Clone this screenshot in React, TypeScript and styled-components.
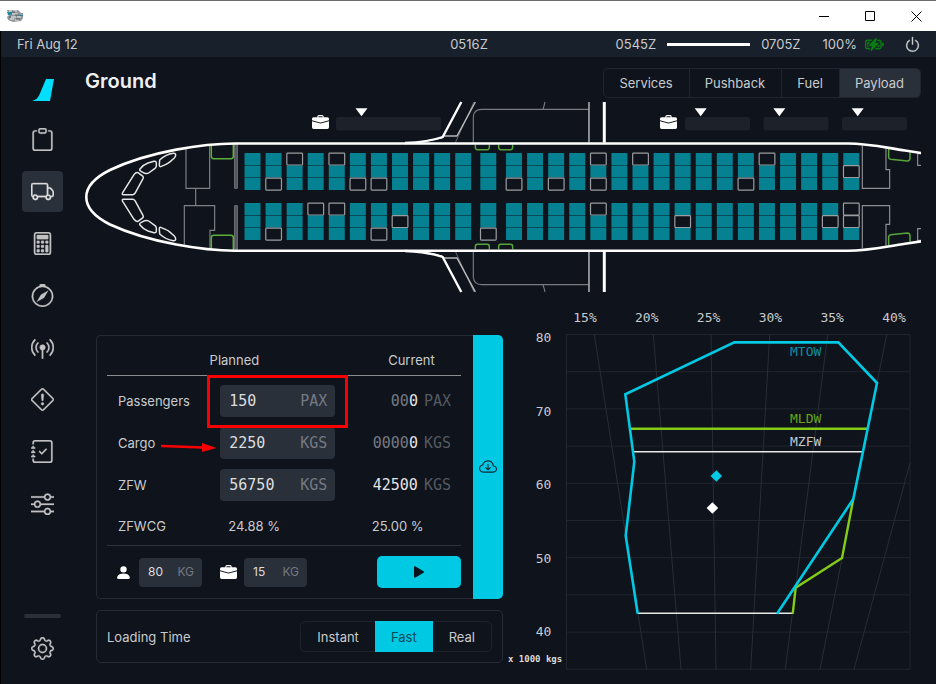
import React, { useState } from 'react';
import styled, { createGlobalStyle, css } from 'styled-components';
import {
  BsBatteryCharging,
  BsBriefcaseFill,
  BsBroadcastPin,
  BsCalculator,
  BsClipboard,
  BsCloudArrowDown,
  BsCompass,
  BsExclamationDiamond,
  BsGear,
  BsJournalCheck,
  BsPersonFill,
  BsPlayFill,
  BsPower,
  BsSliders,
  BsTruck,
} from 'react-icons/bs';

const color = {
  body: '#0f131b',
  status: '#17202b',
  accent: '#2a303a',
  border: '#262c36',
  text: '#c9cbce',
  dim: '#747982',
  faint: '#545962',
  cyan: '#00c9e4',
  teal: '#058192',
  green: '#84cc16',
  red: '#fb0000',
};

const sans = "Inter, 'Liberation Sans', sans-serif";
const mono = "'DejaVu Sans Mono', 'Liberation Mono', monospace";

const GlobalStyle = createGlobalStyle`
  *, *::before, *::after { box-sizing: border-box; }
  body { margin: 0; background: ${color.body}; color: ${color.text}; font: 14px/20px ${sans}; }
  button, input { font: inherit; color: inherit; }
  svg { display: block; }
`;

const Window = styled.div`
  display: flex;
  flex-direction: column;
  min-height: 100vh;
`;

const TitleBar = styled.header`
  display: flex;
  align-items: center;
  justify-content: space-between;
  height: 31px;
  padding: 0 0 0 7px;
  border-top: 1px solid #6b6a70;
  background: #fff;
`;

const WindowControls = styled.div`
  display: flex;
  gap: 6px;
`;

const WindowButton = styled.button`
  display: grid;
  place-items: center;
  width: 40px;
  height: 26px;
  padding: 0;
  border: 0;
  background: none;
`;

const StatusBar = styled.div`
  display: grid;
  grid-template-columns: 1fr auto 1fr;
  align-items: center;
  height: 26px;
  padding: 0 15px 0 16px;
  border-left: 1px solid #000;
  background: ${color.status};
  font-size: 13px;
`;

const StatusRight = styled.div`
  display: flex;
  align-items: center;
  justify-content: flex-end;
`;

const FlightProgress = styled.div`
  width: 83px;
  height: 3px;
  margin: 0 11px;
  background: #fff;
`;

const Battery = styled.div`
  display: flex;
  align-items: center;
  gap: 8px;
  margin: 0 20px 0 22px;
  svg { color: #0a7d10; stroke: currentColor; stroke-width: 0.3; }
`;

const IconButton = styled.button`
  padding: 0;
  border: 0;
  background: none;
  svg { stroke: currentColor; stroke-width: 0.4; }
`;

const Body = styled.div`
  display: flex;
  flex: 1;
  border-left: 1px solid #000;
`;

const Sidebar = styled.nav`
  display: flex;
  flex-direction: column;
  align-items: center;
  flex: none;
  width: 84px;
  padding: 22px 1px 15px 0;
`;

const NavList = styled.div`
  display: flex;
  flex-direction: column;
  gap: 11px;
  margin-top: 18px;
`;

const NavLink = styled.a<{ $active?: boolean }>`
  display: grid;
  place-items: center;
  width: 41px;
  height: 41px;
  border-radius: 4px;
  color: ${(p) => (p.$active ? '#dededf' : '#c2c2c3')};
  background: ${(p) => (p.$active ? color.accent : 'transparent')};
  svg { stroke: currentColor; stroke-width: 0.2; }
`;

const NavDivider = styled.div`
  width: 37px;
  height: 4px;
  margin: auto 0 10px;
  border-radius: 2px;
  background: ${color.accent};
`;

const Content = styled.main`
  flex: 1;
  min-width: 0;
  padding: 11px 15px 14px 0;
`;

const PageHeader = styled.div`
  display: flex;
  align-items: center;
  justify-content: space-between;
  height: 30px;
  margin-bottom: 3px;
`;

const Title = styled.h1`
  margin: 0 0 5px;
  color: #f0f0f1;
  font-size: 20px;
  font-weight: 600;
  line-height: 24px;
`;

const Tabs = styled.div`
  display: flex;
  height: 30px;
  border: 1px solid #1f262f;
  border-radius: 5px;
  overflow: hidden;
`;

const Tab = styled.button<{ $active?: boolean }>`
  padding: 0 16px 0 15px;
  border: 0;
  font-size: 13px;
  background: ${(p) => (p.$active ? color.accent : 'transparent')};
  & + & { border-left: 1px solid #1f262f; }
`;

const Drawing = styled.svg`
  width: 100%;
  height: auto;
`;

const Lower = styled.div`
  display: grid;
  grid-template-columns: minmax(0, 418fr) minmax(0, 415fr);
  gap: 3px;
  margin-top: 12px;
`;

const Forms = styled.div`
  padding: 30px 0 0 11px;
`;

const PayloadCard = styled.section`
  display: flex;
`;

const PayloadPanel = styled.div`
  flex: 1;
  min-width: 0;
  padding: 0 12px 0 10px;
  border: 1px solid ${color.border};
  border-right: 0;
  border-radius: 5px 0 0 5px;
`;

const ImportButton = styled.button`
  display: grid;
  place-items: center;
  width: 30px;
  padding: 0;
  border: 0;
  border-radius: 0 5px 5px 0;
  color: #0f2a35;
  background: ${color.cyan};
`;

const PayloadTable = styled.table`
  width: 100%;
  border-spacing: 0;
  table-layout: fixed;
  font-size: 13px;
`;

const HeadCell = styled.th`
  padding: 12px 0 3px;
  border-bottom: 1px solid #8b8d91;
  font-weight: 400;
  line-height: 24px;
`;

const Row = styled.tr<{ $first?: boolean; $last?: boolean }>`
  height: ${(p) => (p.$first ? 46 : p.$last ? 40 : 42)}px;
  > * {
    padding: ${(p) => (p.$first ? '4px 0 0' : '0')};
    ${(p) => p.$last && css`border-bottom: 1px solid #2b323c;`}
  }
`;

const LabelCell = styled.th`
  font-weight: 400;
  text-align: left;
  label, span { padding-left: 11px; }
`;

const Value = styled.span<{ $indent: number }>`
  padding-left: ${(p) => p.$indent}px;
`;

const Reading = styled.div`
  display: flex;
  justify-content: flex-end;
  gap: 6px;
  padding-right: 10px;
  color: ${color.dim};
  font: 15px/20px ${mono};
  b { color: #e4e4e5; font-weight: 400; }
`;

const Unit = styled.span<{ $faint?: boolean }>`
  color: ${(p) => (p.$faint ? color.faint : color.dim)};
`;

const Field = styled.div<{ $small?: boolean }>`
  position: relative;
  display: flex;
  align-items: center;
  width: ${(p) => (p.$small ? 63 : 115)}px;
  height: ${(p) => (p.$small ? 29 : 32)}px;
  padding: 0 8px 0 9px;
  border-radius: 4px;
  background: ${color.accent};
  font: ${(p) => (p.$small ? `12px/20px ${sans}` : `15px/20px ${mono}`)};
`;

const FieldInput = styled.input`
  flex: 1;
  min-width: 0;
  width: 0;
  padding: 0;
  border: 0;
  outline: 0;
  color: #dcdddf;
  background: none;
`;

const Highlight = styled.div`
  position: absolute;
  z-index: 2;
  inset: -10px -13px -11px;
  border: 3px solid ${color.red};
  pointer-events: none;
`;

const Pointer = styled.svg`
  position: absolute;
  top: 15px;
  left: -59px;
`;

const Footer = styled.div`
  display: flex;
  align-items: center;
  height: 52px;
  padding-left: 8px;
  color: #fff;
`;

const WeightLabel = styled.label`
  display: flex;
  align-items: center;
  gap: 7px;
  margin-right: 18px;
`;

const StartButton = styled.button`
  display: grid;
  place-items: center;
  width: 84px;
  height: 32px;
  margin-left: auto;
  padding: 0;
  border: 0;
  border-radius: 5px;
  color: #0b141c;
  background: ${color.cyan};
`;

const LoadingCard = styled.section`
  display: flex;
  align-items: center;
  justify-content: space-between;
  margin-top: 11px;
  padding: 10px;
  border: 1px solid ${color.border};
  border-radius: 5px;
  font-size: 13px;
`;

const Segments = styled.div`
  display: flex;
  height: 31px;
  border: 1px solid #1d232d;
  border-radius: 5px;
`;

const Segment = styled.button<{ $active?: boolean }>`
  margin: -1px 0;
  padding: 0 16px;
  border: 0;
  color: ${(p) => (p.$active ? '#0c4a5a' : color.text)};
  background: ${(p) => (p.$active ? color.cyan : 'transparent')};
`;

function AppIcon() {
  return (
    <svg width="16" height="14" viewBox="0 0 16 14" aria-hidden="true">
      <path d="M0 1h11l3 3h2v5l-2 3-8 1-5-2-1-3 2-2z" fill="#8f979a" />
      <path d="M0 3h5v3H1zM12 6h4v1h-4z" fill="#1f8ba0" />
      <path d="M2 2h3M6 2h4M5 5h6M4 8h5M10 8h4M3 10h4M8 11h4" stroke="#f0f0f0" strokeWidth="1" />
      <path d="M5 3h3M8 6h4M2 8h2M9 10h4" stroke="#4e575a" strokeWidth="1" />
    </svg>
  );
}

function TailLogo() {
  return (
    <svg width="22" height="22" viewBox="0 0 22 22" aria-label="Dashboard">
      <path d="M14 0h8l-4 22H0c4-1 6-3 7.500-6.500z" fill="#00e0fe" />
    </svg>
  );
}

const navItems = [
  { name: 'Dispatch', icon: BsClipboard },
  { name: 'Ground', icon: BsTruck },
  { name: 'Performance', icon: BsCalculator },
  { name: 'Navigation', icon: BsCompass },
  { name: 'ATC', icon: BsBroadcastPin },
  { name: 'Failures', icon: BsExclamationDiamond },
  { name: 'Checklists', icon: BsJournalCheck },
  { name: 'Presets', icon: BsSliders },
];

const seatColumns = Array.from({ length: 29 }, (_, i) => {
  if (i < 11) return 244.5 + 21.07 * i;
  if (i === 11) return 480.3;
  return 506 + 21.08 * (i - 12);
});
const seatRows = [153, 165.5, 178, 203, 215.5, 228];
const emptySeats = [
  [2, 4, 16, 18, 24],
  [28],
  [1, 5, 6, 12, 14, 16, 23],
  [3, 4, 16, 28],
  [7, 20, 27, 28],
  [1, 6, 11],
];

const cargoHolds = [
  { x: 336, width: 105, marker: 361.5 },
  { x: 685, width: 65, marker: 700.7 },
  { x: 763.5, width: 65, marker: 779.3 },
  { x: 842, width: 65, marker: 857.7 },
];

function CockpitSide() {
  return (
    <g stroke="#e6e6e6" strokeWidth="4.500" strokeLinejoin="round">
      <path d="M174 218L189 229Q191 232 189 236L165 280Q162 284 158 284H130Q125 284 128 278L162 224Q168 216 174 218Z" />
      <path d="M180 207Q190 194 204 189L222 184Q229 182 229 190V198Q229 202 225 205L206 219Q202 222 194 220L183 214Q177 211 180 207Z" />
      <path d="M239 180Q258 163 280 160Q287 159 287 165Q287 170 283 174L268 187Q264 191 258 193L244 199Q238 202 238 195Z" />
    </g>
  );
}

function WingSide() {
  return (
    <g>
      <path d="M466 158L522 36" stroke="#74767b" strokeWidth="2.500" />
      <path d="M526 36L471 138H432" stroke="#b4b5b7" strokeWidth="4.500" />
      <path d="M484 36L428 141C400 151 365 157 315 159" stroke="#fff" strokeWidth="7" />
      <path d="M428 143C400 150 375 154 350 159" stroke="#fff" strokeWidth="4" />
      <path d="M520 158V80Q522 58 544 58H867M735 36L732 48L729 58" stroke="#777a80" strokeWidth="3.500" />
      <path d="M867 36V158" stroke="#a3a4a8" strokeWidth="5" />
      <path d="M913 36V158" stroke="#fff" strokeWidth="9" />
      <path d="M526 164V172Q526 179 532 179H562Q568 179 568 172V164M596 164V172Q596 179 602 179H632Q638 179 638 172V164" stroke="#56a53a" strokeWidth="4.500" />
    </g>
  );
}

function TailSide() {
  return (
    <g>
      <path d="M427 167V295H509V239H498V175" stroke="#8c8e93" strokeWidth="3.500" />
      <path d="M603 191H593V226H603" stroke="#8c8e93" strokeWidth="3.500" />
      <path d="M506 177V202Q506 207 512 208L562 213Q569 213 570 206V187" stroke="#56a53a" strokeWidth="4.500" />
    </g>
  );
}

function Aircraft() {
  return (
    <Drawing viewBox="85 101 836 192" fill="none" role="img" aria-label="Seat and cargo map">
      {cargoHolds.map((hold) => (
        <g key={hold.x}>
          <rect x={hold.x} y="117" width={hold.width} height="13.500" rx="2" fill="#1d2129" />
          <path d={`M${hold.marker - 6} 108.300h12l-6 8z`} fill="#fff" />
        </g>
      ))}
      <BsBriefcaseFill x="312" y="114" size={17} color="#fff" />
      <BsBriefcaseFill x="660" y="114" size={17} color="#fff" />

      <g transform="translate(80 100) scale(0.3333)">
        <path d="M318 144V265H389V134M347 265V317M313 434V317H404V391H390V446" stroke="#7e8085" strokeWidth="3.500" />
        <path d="M464 132H472V265H464ZM464 317H472V448H464Z" fill="#4c4f55" stroke="#85878b" strokeWidth="2.500" />
        <path d="M394 134V169Q394 176 401 176H453Q460 176 460 169V132M394 448V413Q394 406 401 406H453Q460 406 460 413V450" stroke="#5cb038" strokeWidth="4.500" />
        <CockpitSide />
        <g transform="translate(0 582) scale(1 -1)"><CockpitSide /></g>
      </g>
      <g transform="translate(300 90) scale(0.3333)">
        <WingSide />
        <g transform="translate(0 642) scale(1 -1)"><WingSide /></g>
      </g>
      <g transform="translate(720 90) scale(0.3333)">
        <TailSide />
        <g transform="translate(0 642) scale(1 -1)"><TailSide /></g>
      </g>

      <path
        d="M923 153.300L905 150.500C885 147.500 868 143.500 848 143.500H235C205 143.500 150 151 110 170C95 177.500 86.300 187 86.300 197C86.300 207 95 217 110 224.500C150 243 205 250.700 235 250.700H848C868 250.700 885 246.700 905 243.800L923 241"
        stroke="#fff"
        strokeWidth="2.600"
      />

      {seatRows.map((y, row) =>
        seatColumns.map((x, col) =>
          emptySeats[row].includes(col) ? (
            <rect key={`${row}-${col}`} x={x + 0.2} y={y + 0.1} width="15.700" height="12" rx="0.800" stroke="#9b9da0" strokeWidth="1.200" />
          ) : (
            <rect key={`${row}-${col}`} x={x} y={y} width="16" height="12" rx="0.500" fill={color.teal} />
          ),
        ),
      )}
    </Drawing>
  );
}

const ChartText = styled.text<{ $small?: boolean }>`
  font-family: ${mono};
  font-size: ${(p) => (p.$small ? 9 : 13)}px;
  font-weight: ${(p) => (p.$small ? 700 : 400)};
`;

const massLines = Array.from({ length: 10 }, (_, i) => 334.5 + 37.2 * i);
const cgLines = [
  'M594.300 334.500L646.700 669.300',
  'M653.300 334.500L681 669.300',
  'M711 334.500L716 669.300',
  'M769.700 334.500L750.700 669.300',
  'M827.700 334.500L785.300 669.300',
  'M886.700 334.500L820 669.300',
  'M910 463L854 669.300',
];

function EnvelopeChart() {
  return (
    <Drawing viewBox="506 305 415 365" fill="none" role="img" aria-label="Weight and balance envelope">
      <g stroke="#20252e" strokeWidth="1">
        {massLines.map((y) => <path key={y} d={`M566 ${y}H910`} />)}
        <path d="M566.500 334.500V669M910 334.500V669" />
        {cgLines.map((d) => <path key={d} d={d} stroke="#282d36" />)}
      </g>
      <g fill={color.text} textAnchor="middle">
        {[15, 20, 25, 30, 35, 40].map((cg, i) => (
          <ChartText key={cg} x={585 + 61.8 * i} y="322">{cg}%</ChartText>
        ))}
        {[80, 70, 60, 50, 40].map((mass, i) => (
          <ChartText key={mass} x="543.500" y={342 + 73.6 * i}>{mass}</ChartText>
        ))}
      </g>
      <ChartText $small x="508" y="662" fill="#dcdcdc">x 1000 kgs</ChartText>

      <path d="M637.700 613.300H792.700" stroke="#e8e8e8" strokeWidth="1.400" />
      <path d="M634 451.700H862" stroke="#e8e8e8" strokeWidth="1.500" />
      <path d="M631 428.700H867" stroke={color.green} strokeWidth="2.600" />
      <path d="M853.300 499L842 558L795.700 587.700L792.700 613.800" stroke={color.green} strokeWidth="2.400" />
      <path
        d="M637.700 613.800L625.700 535.700L634.300 461.700L625.300 394.300L734.300 342.400H838.300L877 383L853.300 499L777 613.800"
        stroke={color.cyan}
        strokeWidth="2.600"
      />
      <path d="M716.300 470.200l5.800 5.800-5.800 5.800-5.800-5.800z" fill={color.cyan} />
      <path d="M712.400 502.200l5.800 5.800-5.800 5.800-5.800-5.800z" fill="#fff" />
      <ChartText x="790" y="356" fill="#078fa3">MTOW</ChartText>
      <ChartText x="790" y="423" fill="#69a417">MLDW</ChartText>
      <ChartText x="790" y="446" fill="#c6c8cb">MZFW</ChartText>
    </Drawing>
  );
}

const plannedRows = [
  { id: 'pax', label: 'Passengers', value: '150', unit: 'PAX', lead: '00', current: '0' },
  { id: 'cargo', label: 'Cargo', value: '2250', unit: 'KGS', lead: '0000', current: '0' },
  { id: 'zfw', label: 'ZFW', value: '56750', unit: 'KGS', lead: '', current: '42500' },
];

function PayloadForm() {
  return (
    <PayloadCard>
      <PayloadPanel>
        <PayloadTable>
          <colgroup>
            <col width="32%" />
            <col width="40%" />
            <col width="28%" />
          </colgroup>
          <thead>
            <tr>
              <HeadCell colSpan={2}>Planned</HeadCell>
              <HeadCell>Current</HeadCell>
            </tr>
          </thead>
          <tbody>
            {plannedRows.map((row, i) => (
              <Row key={row.id} $first={i === 0}>
                <LabelCell scope="row"><label htmlFor={row.id}>{row.label}</label></LabelCell>
                <td>
                  <Field>
                    <FieldInput id={row.id} defaultValue={row.value} />
                    <Unit>{row.unit}</Unit>
                    {row.id === 'pax' && <Highlight />}
                    {row.id === 'cargo' && (
                      <Pointer width="56" height="11" viewBox="0 0 56 11" aria-hidden="true">
                        <path d="M1 4L42 5.500" stroke={color.red} strokeWidth="2.600" strokeLinecap="round" />
                        <path d="M41 1L55.500 6L41 10z" fill={color.red} />
                      </Pointer>
                    )}
                  </Field>
                </td>
                <td>
                  <Reading>
                    <span>{row.lead}<b>{row.current}</b></span>
                    <Unit $faint>{row.unit}</Unit>
                  </Reading>
                </td>
              </Row>
            ))}
            <Row $last>
              <LabelCell scope="row"><span>ZFWCG</span></LabelCell>
              <td><Value $indent={8}>24.88 %</Value></td>
              <td><Value $indent={10}>25.00 %</Value></td>
            </Row>
          </tbody>
        </PayloadTable>
        <Footer>
          <WeightLabel aria-label="Passenger weight">
            <BsPersonFill size={17} />
            <Field $small><FieldInput defaultValue="80" /><Unit>KG</Unit></Field>
          </WeightLabel>
          <WeightLabel aria-label="Bag weight">
            <BsBriefcaseFill size={17} />
            <Field $small><FieldInput defaultValue="15" /><Unit>KG</Unit></Field>
          </WeightLabel>
          <StartButton aria-label="Start boarding"><BsPlayFill size={20} /></StartButton>
        </Footer>
      </PayloadPanel>
      <ImportButton aria-label="Import flight plan"><BsCloudArrowDown size={18} /></ImportButton>
    </PayloadCard>
  );
}

export default function App() {
  const [tab, setTab] = useState('Payload');
  const [speed, setSpeed] = useState('Fast');

  return (
    <Window>
      <GlobalStyle />
      <TitleBar>
        <AppIcon />
        <WindowControls>
          <WindowButton aria-label="Minimize">
            <svg width="11" height="11" stroke="#000"><path d="M0 5.500h10" /></svg>
          </WindowButton>
          <WindowButton aria-label="Maximize">
            <svg width="11" height="11" fill="none" stroke="#000"><path d="M.5.500h9v9h-9z" /></svg>
          </WindowButton>
          <WindowButton aria-label="Close">
            <svg width="11" height="11" stroke="#000"><path d="M.5.500l10 10M10.500.500l-10 10" /></svg>
          </WindowButton>
        </WindowControls>
      </TitleBar>
      <StatusBar>
        <span>Fri Aug 12</span>
        <span>0516Z</span>
        <StatusRight>
          <span>0545Z</span>
          <FlightProgress />
          <span>0705Z</span>
          <Battery>100%<BsBatteryCharging size={19} /></Battery>
          <IconButton aria-label="Power"><BsPower size={17} /></IconButton>
        </StatusRight>
      </StatusBar>
      <Body>
        <Sidebar>
          <TailLogo />
          <NavList>
            {navItems.map(({ name, icon: Icon }) => (
              <NavLink key={name} href={`#${name.toLowerCase()}`} aria-label={name} $active={name === 'Ground'}>
                <Icon size={23} />
              </NavLink>
            ))}
          </NavList>
          <NavDivider />
          <NavLink href="#settings" aria-label="Settings"><BsGear size={23} /></NavLink>
        </Sidebar>
        <Content>
          <PageHeader>
            <Title>Ground</Title>
            <Tabs>
              {['Services', 'Pushback', 'Fuel', 'Payload'].map((name) => (
                <Tab key={name} $active={name === tab} onClick={() => setTab(name)}>{name}</Tab>
              ))}
            </Tabs>
          </PageHeader>
          <Aircraft />
          <Lower>
            <Forms>
              <PayloadForm />
              <LoadingCard>
                <span>Loading Time</span>
                <Segments>
                  {['Instant', 'Fast', 'Real'].map((name) => (
                    <Segment key={name} $active={name === speed} onClick={() => setSpeed(name)}>{name}</Segment>
                  ))}
                </Segments>
              </LoadingCard>
            </Forms>
            <EnvelopeChart />
          </Lower>
        </Content>
      </Body>
    </Window>
  );
}
